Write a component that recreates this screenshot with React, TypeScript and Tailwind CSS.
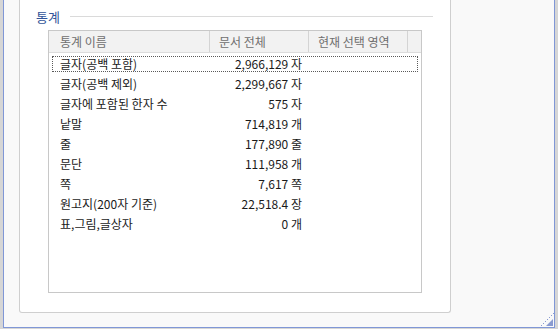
import React from "react";

const rows: { name: string; value: string; unit: string }[] = [
  { name: "글자(공백 포함)", value: "2,966,129", unit: "자" },
  { name: "글자(공백 제외)", value: "2,299,667", unit: "자" },
  { name: "글자에 포함된 한자 수", value: "575", unit: "자" },
  { name: "낱말", value: "714,819", unit: "개" },
  { name: "줄", value: "177,890", unit: "줄" },
  { name: "문단", value: "111,958", unit: "개" },
  { name: "쪽", value: "7,617", unit: "쪽" },
  { name: "원고지(200자 기준)", value: "22,518.4", unit: "장" },
  { name: "표,그림,글상자", value: "0", unit: "개" },
];

const font = { fontFamily: '"Noto Sans CJK KR", "Noto Sans", sans-serif' };

export default function App() {
  return (
    <div
      className="w-[558px] h-[329px] flex flex-col bg-[#d6d6d6] overflow-hidden text-[12px] leading-none"
      style={font}
    >
      <div className="flex h-[328px]">
        <div className="w-[3px] bg-[#d6d6d6]" />
        <div className="relative w-[552px] h-[328px] bg-[#f9f9f9] border-l border-r border-b border-[#8097d6]">
          <div className="ml-[15px] w-[432px] h-[313px] bg-white border border-t-0 border-[#cfcfcf] rounded-b-[3px] flex flex-col">
            <div className="mt-[7px] h-[18px] pl-[16px] pr-[17px] flex items-center gap-[10px]">
              <span className="text-[13px] text-[#33559a]">통계</span>
              <div className="flex-1 h-px bg-[#dadada]" />
            </div>
            <div className="mt-[5px] ml-[28px] w-[374px] h-[263px] border border-[#c8c8c8] flex flex-col">
              <div className="h-[22px] flex bg-[#f2f2f2] border-b border-[#dcdcdc] text-[#6f6f6f]">
                <div className="w-[161px] pl-[11px] border-r border-[#d4d4d4] flex items-center">통계 이름</div>
                <div className="w-[99px] pl-[9px] border-r border-[#d4d4d4] flex items-center">문서 전체</div>
                <div className="w-[99px] pl-[9px] border-r border-[#d4d4d4] flex items-center">현재 선택 영역</div>
                <div className="flex-1" />
              </div>
              <div className="pt-[1px] flex flex-col text-[#1a1a1a]">
                {rows.map((r, i) => (
                  <div key={r.name} className="relative h-[20px] flex items-center">
                    {i === 0 && (
                      <span className="absolute top-[2px] bottom-[2px] left-[3px] right-[3px] border border-dotted border-[#5a5a5a]" />
                    )}
                    <div className="w-[161px] pl-[11px] whitespace-nowrap">{r.name}</div>
                    <div className="w-[99px] pr-[7px] text-right whitespace-nowrap">
                      {r.value} {r.unit}
                    </div>
                  </div>
                ))}
              </div>
            </div>
          </div>
          <svg
            className="absolute right-[0px] bottom-[0px]"
            width="14"
            height="14"
            viewBox="0 0 14 14"
          >
            {Array.from({ length: 7 }).map((_, k) => (
              <rect key={k} x={1 + k * 2} y={12 - k * 2} width="1" height="1" fill="#8a9bd0" />
            ))}
            <polygon points="13,6 13,13 6,13" fill="#8a9bd0" />
          </svg>
        </div>
        <div className="flex-1 bg-[#d6d6d6]" />
      </div>
      <div className="h-[1px] bg-[#d6d6d6]" />
    </div>
  );
}
